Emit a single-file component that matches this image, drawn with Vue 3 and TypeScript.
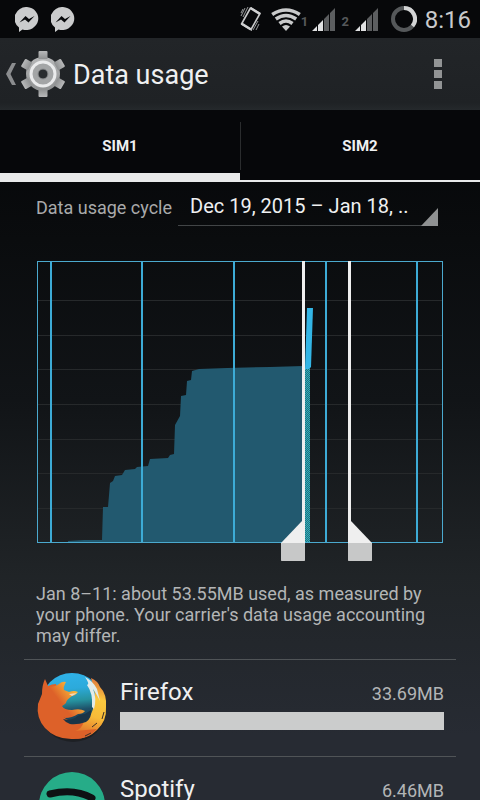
<script setup lang="ts">
import { computed, ref } from 'vue'

interface AppUsage {
  name: string
  amount: string
  share: number
  icon: 'firefox' | 'spotify'
}

const sims = ['SIM1', 'SIM2']
const activeSim = ref(0)
const cycle = ref('current')
const rangeStart = ref(265)
const rangeEnd = ref(311)

const apps: AppUsage[] = [
  { name: 'Firefox', amount: '33.69MB', share: 100, icon: 'firefox' },
  { name: 'Spotify', amount: '6.46MB', share: 19, icon: 'spotify' },
]

const weekLines = [13, 104, 196, 288, 379]
const gridLines = [39, 74, 108, 143, 178, 212, 247]

const usage: [number, number][] = [
  [31, 280], [47, 279], [65, 279], [66, 246], [71, 246], [73, 222], [76, 220],
  [78, 215], [85, 214], [88, 209], [98, 208], [100, 206], [111, 205], [113, 198],
  [131, 197], [133, 194], [137, 193], [138, 164], [143, 155], [144, 135],
  [149, 134], [150, 120], [154, 119], [155, 110], [162, 108], [190, 107],
  [233, 106], [266, 105],
]
const usagePoints = computed(() =>
  [[31, 281], ...usage, [266, 281]].map((p) => p.join(',')).join(' '),
)

const startGrip = computed(() => {
  const x = rangeStart.value
  return `M${x} 260L${x - 21} 282V298Q${x - 21} 300 ${x - 19} 300H${x + 1}Q${x + 3} 300 ${x + 3} 298V260Z`
})
const endGrip = computed(() => {
  const x = rangeEnd.value
  return `M${x + 3} 260L${x + 24} 282V298Q${x + 24} 300 ${x + 22} 300H${x + 2}Q${x} 300 ${x} 298V260Z`
})
</script>

<template>
  <div class="screen">
    <div class="status">
      <div class="notices">
        <svg v-for="n in 2" :key="n" class="messenger" viewBox="0 0 24 25" aria-hidden="true">
          <path fill="#cbcccd" d="M12 0a12 11.500 0 1 1-4.500 22.400L4 25V20.500A12 11.500 0 0 1 12 0Z" />
          <path fill="#08090b" d="M4.500 15.500 10.500 9l3.500 3 5.500-3-6 6.500-3.500-3z" />
        </svg>
      </div>
      <div class="signals">
        <svg class="vibrate" viewBox="0 0 22 26" aria-hidden="true">
          <path d="M10.500 2 20 7.500 11 23.500 1.500 18Z" fill="none" stroke="#c8c9ca" stroke-width="1.600" stroke-linejoin="round" />
          <path d="M1.500 17.500 11 23.500M10.500 2 20 8" stroke="#d0d1d2" stroke-width="2.500" />
          <path d="M1 10 5 2M3 11 8 1M1 7 3 3M13 24l5-9M16 24l3-6M11 25l1-1" stroke="#999b9c" stroke-width="1" />
        </svg>
        <svg class="wifi" viewBox="0 0 30 23" aria-hidden="true">
          <g fill="none" stroke="#c9cacb" stroke-width="3.600">
            <path d="M1.200 6.500Q15-2.500 28.800 6.500" />
            <path d="M4.800 11Q15 4 25.200 11" />
            <path d="M8.500 15.500Q15 10.500 21.500 15.500" />
          </g>
          <path d="M11 18.500Q15 15.500 19 18.500L15 23Z" fill="#c9cacb" />
        </svg>
        <span class="slot first">1</span>
        <svg class="bars" viewBox="0 0 24 24" aria-hidden="true">
          <path d="M0 24 5 19V24ZM6 18 11 13V24H6Z" fill="#e0e1e2" />
          <path d="M12 12 17 7V24H12ZM18 6 23 1V24H18Z" fill="#5c5e60" />
        </svg>
        <span class="slot second">2</span>
        <svg class="bars" viewBox="0 0 24 24" aria-hidden="true">
          <path d="M0 24 5 19V24ZM6 18 11 13V24H6Z" fill="#e0e1e2" />
          <path d="M12 12 17 7V24H12ZM18 6 23 1V24H18Z" fill="#5c5e60" />
        </svg>
        <svg class="battery" viewBox="0 0 26 26" aria-hidden="true">
          <circle cx="13" cy="13" r="11" fill="none" stroke="#55585a" stroke-width="4" />
          <path d="M13 2A11 11 0 0 1 21.500 20" fill="none" stroke="#d4d5d6" stroke-width="4" />
        </svg>
        <span class="clock">8:16</span>
      </div>
    </div>

    <header class="bar">
      <button class="up" type="button" aria-label="Navigate up">
        <svg class="chevron" viewBox="0 0 10 22" aria-hidden="true">
          <path d="M6 0H10L4.500 11 10 22H6L0 11Z" fill="#8b8d8f" />
        </svg>
        <svg class="gear" viewBox="0 0 44 46" aria-hidden="true">
          <defs>
            <linearGradient id="metal" x1="0" y1="0" x2="0" y2="1">
              <stop offset="0" stop-color="#b8b9ba" />
              <stop offset="1" stop-color="#8e9091" />
            </linearGradient>
          </defs>
          <g fill="url(#metal)">
            <circle cx="22" cy="23" r="17" />
            <path v-for="a in [0, 60, 120, 180, 240, 300]" :key="a" :transform="`rotate(${a} 22 23)`" d="M17.500 8V1Q17.500 0 18.500 0H25.500Q26.500 0 26.500 1V8Z" />
          </g>
          <circle cx="22" cy="23" r="12" fill="#a3a5a6" stroke="#eaebec" stroke-width="3" />
          <circle cx="22" cy="23" r="5" fill="#292c2f" stroke="#8c8e90" stroke-width="1" />
        </svg>
      </button>
      <h1>Data usage</h1>
      <button class="more" type="button" aria-label="More options">
        <i></i><i></i><i></i>
      </button>
    </header>

    <div class="tabs" role="tablist">
      <button
        v-for="(sim, i) in sims"
        :key="sim"
        class="tab"
        :class="{ active: activeSim === i }"
        type="button"
        role="tab"
        :aria-selected="activeSim === i"
        @click="activeSim = i"
      >
        {{ sim }}
      </button>
    </div>

    <main>
      <div class="cycle">
        <label for="cycle">Data usage cycle</label>
        <div class="spinner">
          <select id="cycle" v-model="cycle">
            <option value="current">Dec 19, 2015 – Jan 18, ..</option>
          </select>
        </div>
      </div>

      <div class="chart">
        <svg viewBox="0 0 406 301" role="img" aria-label="Data usage chart">
          <defs>
            <pattern id="weave" width="2" height="2" patternUnits="userSpaceOnUse">
              <rect width="2" height="2" fill="#236b86" />
              <path d="M0 0H1V1H0ZM1 1H2V2H1Z" fill="#31b5b4" />
            </pattern>
          </defs>
          <rect v-for="y in gridLines" :key="y" x="1" :y="y" width="404" height="1" fill="#26292b" />
          <polygon :points="usagePoints" fill="#22596f" />
          <rect x="268" y="107" width="5" height="174" fill="url(#weave)" />
          <path d="M268 108 270 47H276L274 106 272 108Z" fill="#33b5e5" />
          <rect v-for="x in weekLines" :key="x" :x="x" y="1" width="2" height="280" fill="#3dabd6" />
          <rect x="0.500" y="0.500" width="405" height="281" fill="none" stroke="#4ba9ce" />
          <g fill="#efefef">
            <rect :x="rangeStart" y="0" width="3" height="270" />
            <rect :x="rangeEnd" y="0" width="3" height="270" />
            <path :d="startGrip" />
            <path :d="endGrip" />
          </g>
          <g fill="#c7c8c8">
            <rect :x="rangeStart - 21" y="282" width="24" height="18" rx="1" />
            <rect :x="rangeEnd" y="282" width="24" height="18" rx="1" />
          </g>
        </svg>
        <input v-model.number="rangeStart" class="sweep from" type="range" min="0" max="403" aria-label="Range start" />
        <input v-model.number="rangeEnd" class="sweep to" type="range" min="0" max="403" aria-label="Range end" />
      </div>

      <p class="summary">
        Jan 8–11: about 53.55MB used, as measured by your phone. Your carrier's data usage accounting may differ.
      </p>

      <ul class="apps">
        <li v-for="app in apps" :key="app.name">
          <svg v-if="app.icon === 'firefox'" class="logo" viewBox="0 0 72 72" aria-hidden="true">
            <defs>
              <linearGradient id="globe" x1="0.450" y1="0" x2="0.550" y2="1">
                <stop offset="0" stop-color="#2fb2e8" />
                <stop offset="0.250" stop-color="#2caadb" />
                <stop offset="0.450" stop-color="#26929f" />
                <stop offset="0.600" stop-color="#1e5068" />
                <stop offset="0.800" stop-color="#1b3c50" />
              </linearGradient>
              <linearGradient id="tail" x1="0.600" y1="0" x2="0.400" y2="1">
                <stop offset="0" stop-color="#e07a3c" />
                <stop offset="0.300" stop-color="#fbc93f" />
                <stop offset="0.600" stop-color="#f8bb38" />
                <stop offset="1" stop-color="#dd6129" />
              </linearGradient>
              <linearGradient id="fur" x1="0" y1="0.700" x2="0.800" y2="0.100">
                <stop offset="0.350" stop-color="#dd6129" />
                <stop offset="0.850" stop-color="#f8b83a" />
              </linearGradient>
            </defs>
            <ellipse cx="37" cy="38" rx="33" ry="32" fill="#17191b" opacity=".6" />
            <circle cx="36" cy="32" r="31" fill="url(#globe)" />
            <path fill="url(#tail)" d="M55 6Q62 9 64 15Q71 22 70 35Q71 49 61 58Q50 69 36 66L33 56Q49 53 55 42Q59 34 59 22Z" />
            <path fill="#e3ebe9" d="M49 5Q57 9 61 17L64 29Q60 21 57 17Q61 26 58 37L56 35Q57 21 51 13Q54 12 49 5Z" />
            <path fill="#dd6129" d="M9 7 12 14Q16 12 20 12L24 30Q22 43 32 48Q40 51 48 49Q46 57 39 59L61 57Q52 67 38 67Q20 68 9 56Q0 46 2 32Q4 27 6 22Q6 13 9 7Z" />
            <path fill="url(#fur)" d="M12 15Q19 15 23 12Q26 9 30 10Q27 15 28 18L33 20Q38 18 42 20Q40 23 36 24Q30 28 30 31Q28 33 26 34Q28 38 36 38Q44 36 49 39Q47 42 42 42Q36 46 29 46L12 39Z" />
            <path fill="#1b3446" d="M27 47Q34 49 39 46Q43 42 49 42L55 38Q56 46 50 50Q41 53 34 52Q29 50 27 47Z" />
            <path fill="#f2d9c0" d="M33 22 41 21 36 24Z" />
            <path d="M49 64 55 61M56 55 61 51M66 47 68 40" stroke="#392d27" stroke-width="1" />
          </svg>
          <svg v-else class="logo" viewBox="0 0 72 72" aria-hidden="true">
            <circle cx="36" cy="36" r="33" fill="#26ac88" />
            <g fill="none" stroke="#0e1214" stroke-linecap="round">
              <path d="M14 25Q38 19 56 29" stroke-width="7" />
              <path d="M18 37Q37 32 54 41" stroke-width="5" />
              <path d="M20 48Q36 43 50 51" stroke-width="4" />
            </g>
          </svg>
          <div class="detail">
            <div class="line">
              <span class="name">{{ app.name }}</span>
              <span class="amount">{{ app.amount }}</span>
            </div>
            <div class="track"><div class="fill" :style="{ width: app.share + '%' }"></div></div>
          </div>
        </li>
      </ul>
    </main>
  </div>
</template>

<style>
body {
  background: #272b33;
}
</style>

<style scoped>
.screen {
  height: 100vh;
  display: flex;
  flex-direction: column;
  overflow: hidden;
  box-sizing: border-box;
  background: linear-gradient(#050608 14%, #0a0c0e 30%, #111417 50%, #202427 72%, #272b33 92%);
  color: #eff0f1;
  font-family: Roboto, "Liberation Sans", sans-serif;
}
svg {
  display: block;
  flex: none;
}
button {
  border: 0;
  padding: 0;
  background: none;
  color: inherit;
  font: inherit;
}
.status {
  height: 38px;
  flex: none;
  display: flex;
  justify-content: space-between;
  align-items: center;
  padding: 0 9px 0 15px;
  background: #07080a;
}
.notices,
.signals {
  display: flex;
  align-items: center;
}
.notices {
  gap: 12px;
}
.messenger {
  width: 24px;
  height: 25px;
}
.vibrate {
  width: 22px;
  height: 26px;
  margin-right: 9px;
}
.wifi {
  width: 30px;
  height: 23px;
}
.bars {
  width: 24px;
  height: 24px;
}
.slot {
  color: #55585a;
  font-size: 13px;
  font-weight: 700;
  line-height: 14px;
  padding-top: 6px;
}
.first {
  width: 11px;
}
.second {
  width: 19px;
  text-align: center;
}
.battery {
  width: 26px;
  height: 26px;
  margin: 0 8px 0 12px;
}
.clock {
  color: #c9cacb;
  font-size: 24px;
  line-height: 38px;
  padding-top: 2px;
}
.bar {
  height: 72px;
  flex: none;
  display: flex;
  align-items: center;
  padding: 0 30px 0 6px;
  box-sizing: border-box;
  background: linear-gradient(#222528, #1f2225 90%, #25292c);
}
.up {
  display: flex;
  align-items: center;
  gap: 5px;
}
.chevron {
  width: 10px;
  height: 22px;
}
.gear {
  width: 44px;
  height: 46px;
}
h1 {
  flex: 1;
  margin: 0 0 0 8px;
  padding-top: 2px;
  font-size: 27px;
  font-weight: 400;
  line-height: 32px;
}
.more {
  display: grid;
  gap: 3px;
  padding: 8px;
}
.more i {
  width: 8px;
  height: 8px;
  background: #929495;
}
.tabs {
  height: 72px;
  flex: none;
  display: flex;
  background: #06070a;
}
.tab {
  position: relative;
  flex: 1;
  padding-top: 2px;
  border-bottom: 2px solid #e9eaeb;
  font-size: 15px;
  font-weight: 700;
}
.tab.active {
  border-bottom-width: 9px;
  padding-top: 9px;
}
.tab + .tab::before {
  content: "";
  position: absolute;
  left: 0;
  top: 12px;
  bottom: 10px;
  width: 1px;
  background: #2a2c2e;
}
main {
  padding: 0 24px;
}
.cycle {
  display: flex;
  align-items: center;
  padding: 0 18px 0 12px;
}
.cycle label {
  flex: none;
  color: #a9aaab;
  font-size: 18px;
  line-height: 24px;
  padding-top: 8px;
}
.spinner {
  position: relative;
  flex: 1;
  min-width: 0;
  margin-left: 6px;
}
.spinner::after {
  content: "";
  position: absolute;
  right: 0;
  bottom: 0;
  width: 17px;
  height: 18px;
  background: #8f9192;
  clip-path: polygon(100% 0, 100% 100%, 0 100%);
  pointer-events: none;
}
select {
  appearance: none;
  display: block;
  width: 100%;
  height: 44px;
  box-sizing: border-box;
  padding: 5px 16px 0 12px;
  border: 0;
  border-bottom: 1px solid #424547;
  border-radius: 0;
  background: none;
  color: #eff0f1;
  font-family: inherit;
  font-size: 20px;
}
option {
  background: #202427;
}
.chart {
  position: relative;
  margin: 35px 13px 0;
}
.chart svg {
  width: 100%;
  height: auto;
}
.sweep {
  position: absolute;
  bottom: 0;
  height: 40px;
  margin: 0;
  opacity: 0;
}
.from {
  left: 0;
  width: 75%;
}
.to {
  right: 0;
  width: 25%;
}
.summary {
  margin: 21px 12px 13px;
  color: #b3b5b6;
  font-size: 18px;
  line-height: 21px;
}
.apps {
  margin: 0;
  padding: 0;
  list-style: none;
}
.apps li {
  height: 97px;
  box-sizing: border-box;
  display: flex;
  align-items: flex-start;
  gap: 12px;
  padding: 12px;
  border-top: 1px solid #505457;
}
.logo {
  width: 72px;
  height: 72px;
}
.detail {
  flex: 1;
}
.line {
  display: flex;
  justify-content: space-between;
  align-items: baseline;
  padding: 6px 0 5px;
}
.name {
  font-size: 24px;
  line-height: 29px;
}
.amount {
  color: #b3b5b6;
  font-size: 18px;
}
.fill {
  height: 18px;
  background: #cbcccc;
}
</style>
